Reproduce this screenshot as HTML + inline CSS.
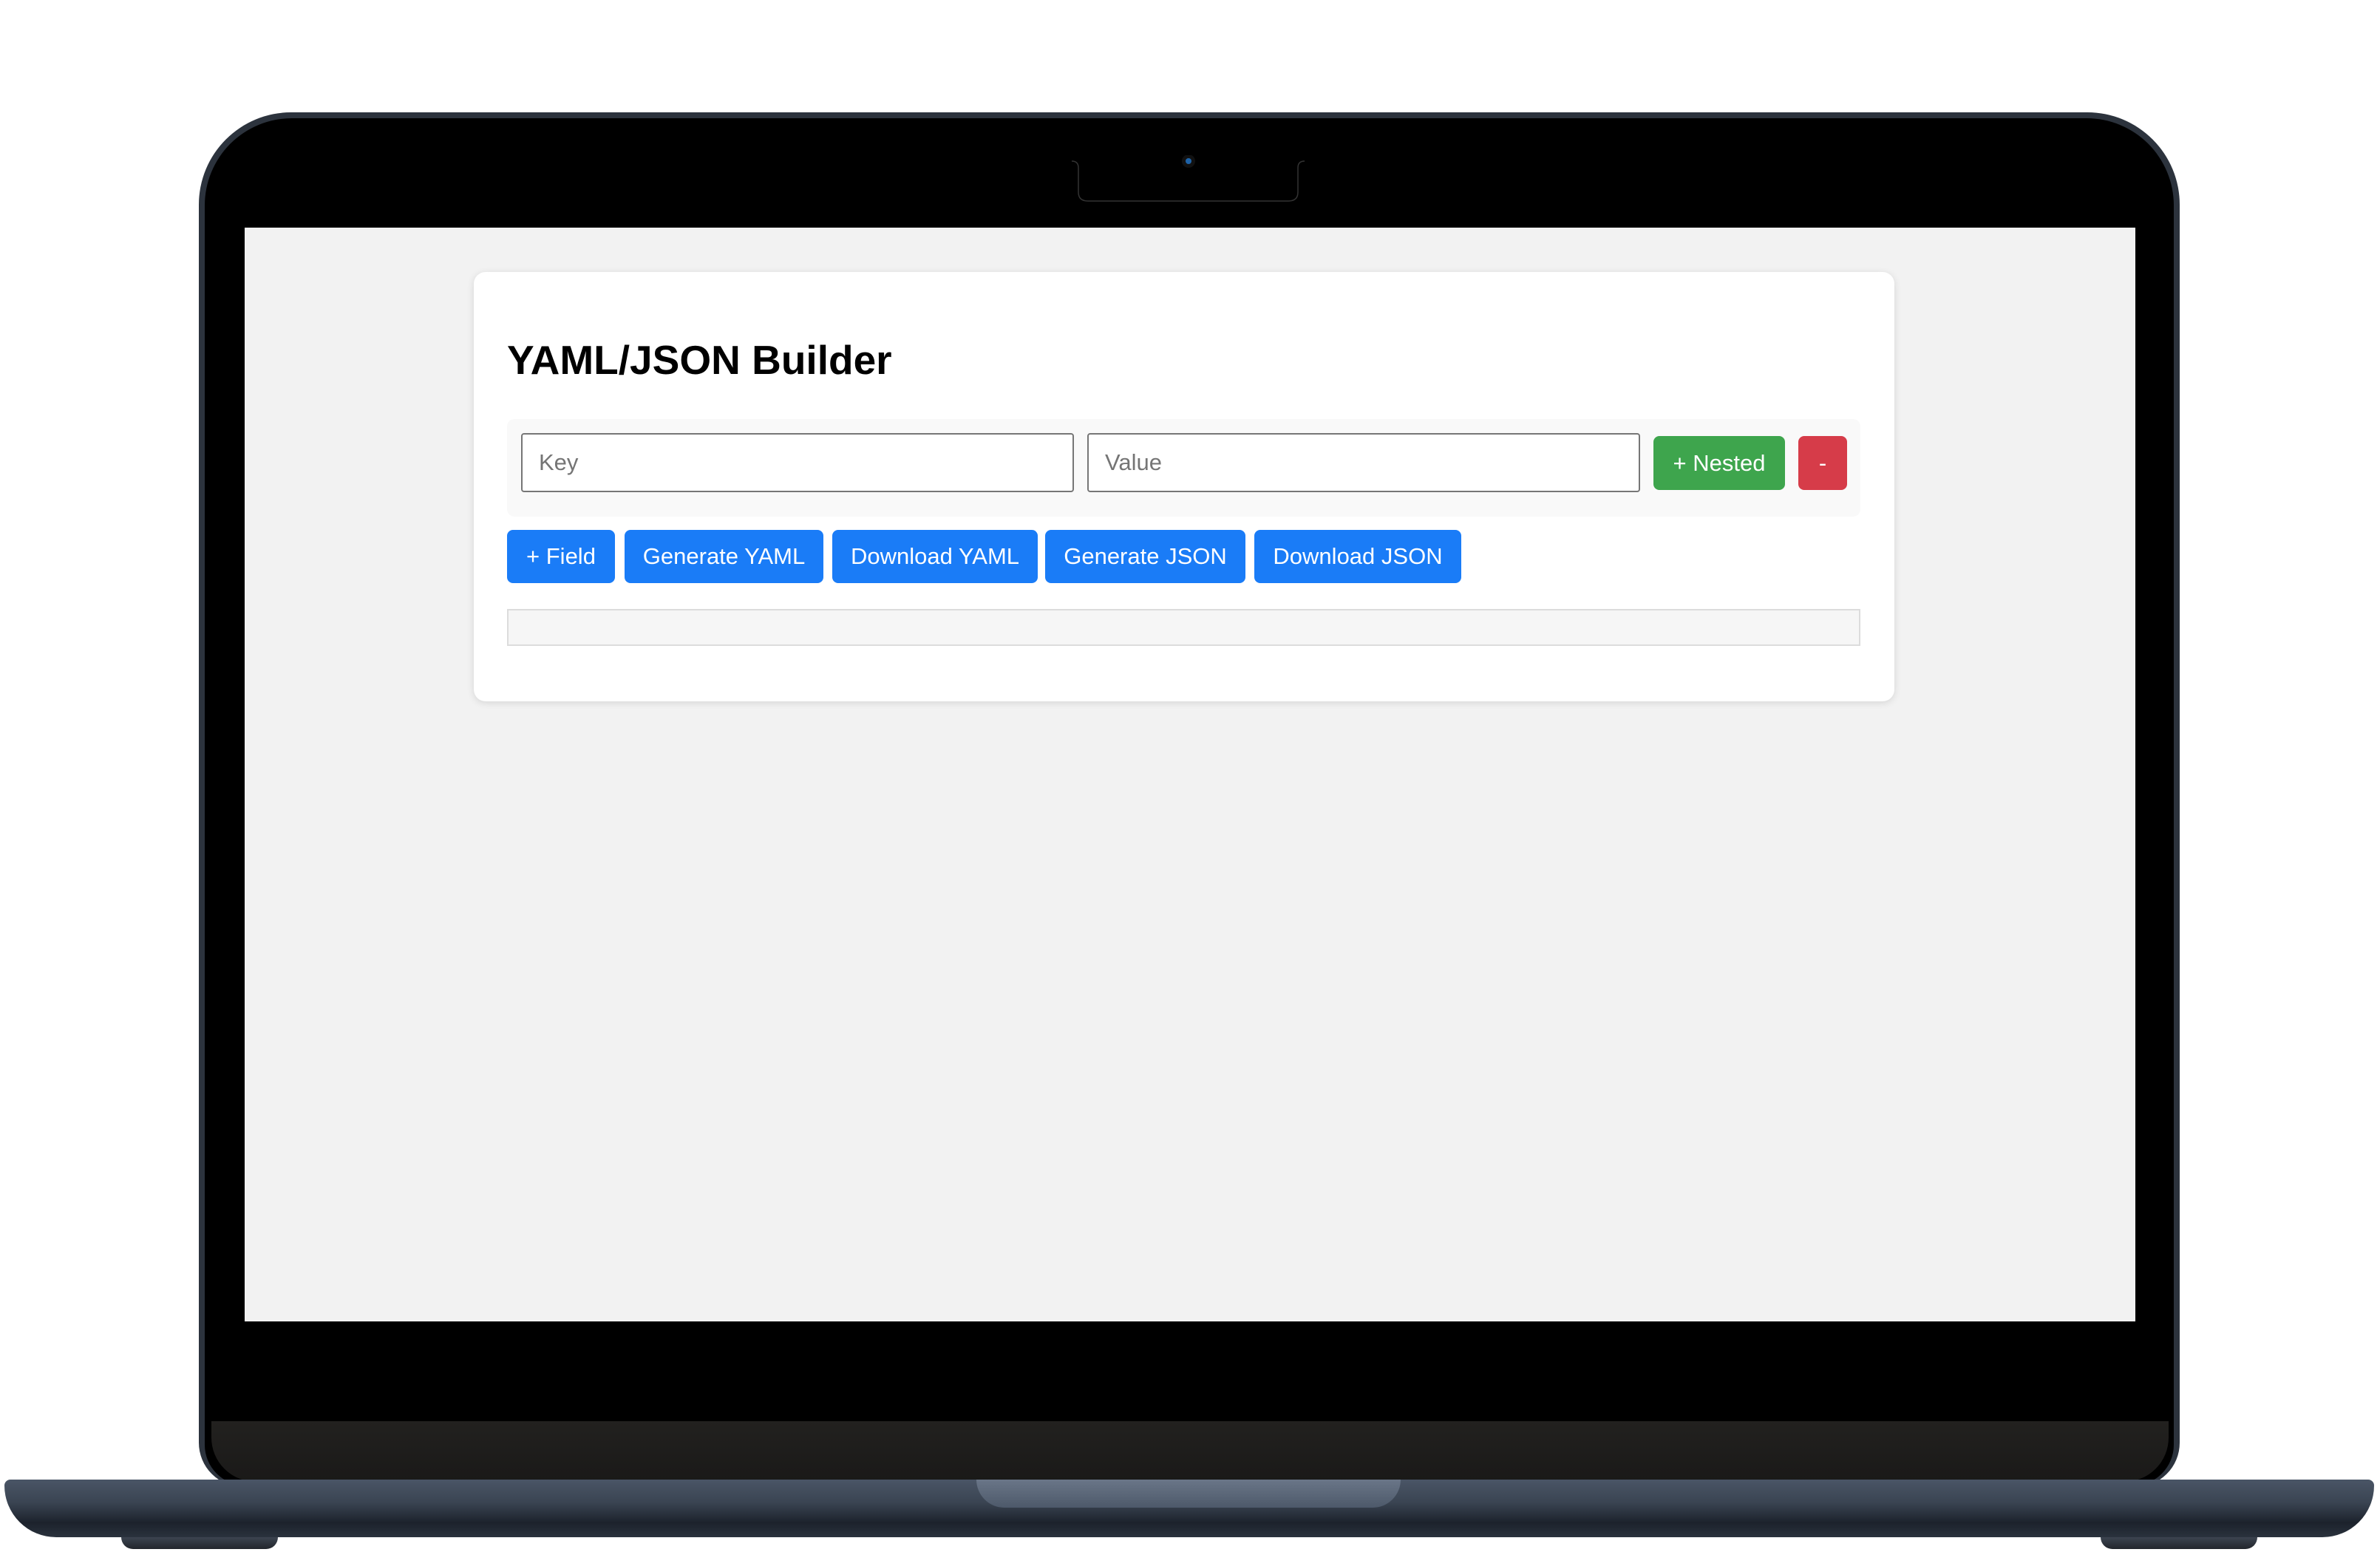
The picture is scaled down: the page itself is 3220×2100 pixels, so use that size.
<!DOCTYPE html>
<html><head><meta charset="utf-8"><style>
*{box-sizing:border-box;margin:0;padding:0}
body{width:3220px;height:2100px;background:#fff;position:relative;overflow:hidden;font-family:"Liberation Sans",Arial,sans-serif}
.abs{position:absolute}
#lid{left:269px;top:152px;width:2680px;height:1860px;border-radius:125px 125px 60px 60px;background:#2c333d;}
#lidin{left:277px;top:160px;width:2664px;height:1850px;border-radius:118px 118px 55px 55px;background:#000;}
#chin{left:286px;top:1923px;width:2648px;height:82px;background:linear-gradient(#22211f,#1a1918);border-radius:0 0 60px 60px}
#screen{left:331px;top:308px;width:2558px;height:1480px;background:#f2f2f2}
#base{left:6px;top:2002px;width:3206px;height:78px;border-radius:8px 8px 70px 70px;background:linear-gradient(#4a5566 0%,#3a4452 40%,#1c222c 75%,#2a323d 100%)}
#hinge{left:1321px;top:2002px;width:574px;height:38px;border-radius:0 0 40px 40px;background:linear-gradient(#6a7688,#4d596a)}
.foot{top:2080px;width:212px;height:16px;background:linear-gradient(#3c4450,#22262c);border-radius:0 0 20px 20px}
#card{left:641px;top:368px;width:1922px;height:581px;background:#fff;border-radius:16px;box-shadow:0 2px 10px rgba(0,0,0,.12)}
h1{position:absolute;left:686px;top:455px;font-size:55px;font-weight:bold;color:#000}
#row{left:686px;top:567px;width:1831px;height:132px;background:#f9f9f9;border-radius:10px}
.inp{top:586px;height:80px;width:748px;border:2px solid #767676;border-radius:4px;background:#fff;color:#757575;font-size:31px;padding-left:22px;line-height:76px}
.btn{color:#fff;font-size:31px;text-align:center;border-radius:8px}
.blue{top:717px;height:72px;line-height:72px;background:#1a7cf7}
</style></head><body>
<div class="abs" id="lid"></div>
<div class="abs" id="lidin"></div>
<div class="abs" id="chin"></div>
<div class="abs" id="screen"></div>
<svg class="abs" style="left:1440px;top:210px" width="340" height="70"><path d="M10 8 Q19 8 19 17 V50 Q19 62 32 62 H303 Q316 62 316 50 V17 Q316 8 325 8" fill="none" stroke="#333" stroke-width="1.5"/><circle cx="168" cy="8" r="9" fill="#111"/><circle cx="168" cy="8" r="4" fill="#1e63a8"/></svg>
<div class="abs" id="base"></div>
<div class="abs" id="hinge"></div>
<div class="abs foot" style="left:164px"></div>
<div class="abs foot" style="left:2842px"></div>
<div class="abs" id="card"></div>
<h1>YAML/JSON Builder</h1>
<div class="abs" id="row"></div>
<div class="abs inp" style="left:705px">Key</div>
<div class="abs inp" style="left:1471px">Value</div>
<div class="abs btn" style="left:2237px;top:590px;width:178px;height:73px;line-height:73px;background:#3ea54d">+ Nested</div>
<div class="abs btn" style="left:2433px;top:590px;width:66px;height:73px;line-height:73px;background:#d63c49">-</div>
<div class="abs btn blue" style="left:686px;width:146px">+ Field</div>
<div class="abs btn blue" style="left:845px;width:269px">Generate YAML</div>
<div class="abs btn blue" style="left:1126px;width:278px">Download YAML</div>
<div class="abs btn blue" style="left:1414px;width:271px">Generate JSON</div>
<div class="abs btn blue" style="left:1697px;width:280px">Download JSON</div>
<div class="abs" style="left:686px;top:824px;width:1831px;height:50px;background:#f6f6f6;border:2px solid #dcdcdc"></div>
</body></html>
